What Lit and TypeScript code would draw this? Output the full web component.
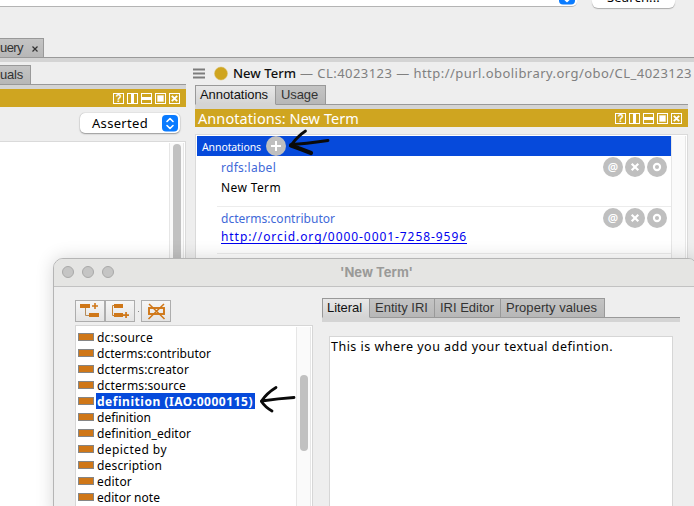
import { LitElement, html, css, svg } from "lit";
import { customElement, property } from "lit/decorators.js";
import { classMap } from "lit/directives/class-map.js";

/** One line of text whose tracking is adjusted so that it spans a given width. */
@customElement("fit-text")
class FitText extends LitElement {
  @property() text = "";
  @property({ type: Number }) w = 0;
  static styles = css`
    :host { display: inline-block; white-space: pre; flex: none; }
    .t { display: inline-block; white-space: pre; }
  `;
  firstUpdated() {
    const el = this.renderRoot.querySelector(".t") as HTMLElement;
    const natural = el.getBoundingClientRect().width;
    if (this.w && natural) {
      el.style.letterSpacing = `${(this.w - natural) / this.text.length}px`;
    }
  }
  render() {
    return html`<span class="t">${this.text}</span>`;
  }
}

/** The five window controls at the right of a gold view header. */
@customElement("view-controls")
class ViewControls extends LitElement {
  static styles = css`
    :host { display: block; height: 11px; }
    svg { display: block; }
    text { font: bold 10px "Liberation Sans", sans-serif; fill: #fff; }
  `;
  render() {
    const box = (x: number) => svg`<rect x=${x + 0.5} y="0.5" width="10" height="10" fill="none" stroke="#fff"/>`;
    return html`<svg width="67" height="11" viewBox="0 0 67 11">
      ${[0, 14, 28, 42, 56].map(box)}
      <text x="2.4" y="9.2">?</text>
      <rect x="18" y="1" width="3" height="9" fill="#fff"/>
      <rect x="29" y="4" width="9" height="3" fill="#fff"/>
      <rect x="44" y="2" width="7" height="7" fill="#fff" opacity=".35"/>
      <rect x="44.500" y="2.500" width="6" height="6" fill="#fff"/>
      <path d="M58.800 2.800l5.400 5.400M64.200 2.800l-5.400 5.400" stroke="#fff" stroke-width="1.900"/>
    </svg>`;
  }
}

interface Tab { label: string; w: number; box: number; active?: boolean; close?: boolean }

@customElement("tab-strip")
class TabStrip extends LitElement {
  @property({ attribute: false }) tabs: Tab[] = [];
  static styles = css`
    :host { display: block; height: 24px; font: 13px "Liberation Sans", sans-serif; }
    .row { display: flex; height: 20px; }
    .tab {
      box-sizing: border-box; height: 20px; border: 1px solid #999; border-left-width: 0;
      background: linear-gradient(#c4c4c4, #b7b7b7); color: #333;
      display: flex; align-items: center; padding-left: 5px; line-height: 18px;
    }
    .tab:first-child { border-left-width: 1px; padding-left: 4px; }
    .active { background: linear-gradient(#e8e8e8, #d4d4d4); color: #111; border-bottom-color: #d4d4d4; }
    .rest { flex: 1; border-bottom: 1px solid #999; }
    .band { height: 4px; background: #d4d4d4; }
    .cut:first-child { border-left: 0; padding-left: 0; }
    .x { margin: 1px 0 0 7px; flex: none; }
  `;
  render() {
    return html`<div class="row">
        ${this.tabs.map((t) => html`<div
          class=${classMap({ tab: true, active: !!t.active, cut: t.label[0] === "u" })}
          style="width:${t.box}px"
        ><fit-text .text=${t.label} .w=${t.w}></fit-text>${t.close
          ? html`<svg class="x" width="10" height="10"><path d="M2.500 2.500l5 5M7.500 2.500l-5 5" stroke="#333" stroke-width="1.200"/></svg>`
          : ""}</div>`)}
        <div class="rest"></div>
      </div><div class="band"></div>`;
  }
}

const stepper = (h = 17) => html`<svg width="16" height=${h} viewBox="0 0 16 17">
  <rect width="16" height="16.500" rx="4" fill="#0a7bff"/>
  <path d="M5 6.500L8 3.500L11 6.500M5 10.500L8 13.500L11 10.500" fill="none" stroke="#fff" stroke-width="1.600" stroke-linecap="round" stroke-linejoin="round"/>
</svg>`;

const roundButtons = html`<svg class="acts" width="64" height="20" viewBox="0 0 64 20">
  <g fill="#bfbfbf"><circle cx="10" cy="10" r="10"/><circle cx="32" cy="10" r="10"/><circle cx="54" cy="10" r="10"/></g>
  <text x="10" y="13.500" text-anchor="middle">@</text>
  <path d="M28.700 6.700l6.600 6.600M35.300 6.700l-6.600 6.600" stroke="#fff" stroke-width="2.200"/>
  <circle cx="54" cy="10" r="3.100" fill="none" stroke="#fff" stroke-width="2.100"/>
</svg>`;

const PROPS: [string, number][] = [
  ["dc:source", 56], ["dcterms:contributor", 114], ["dcterms:creator", 92], ["dcterms:source", 89],
  ["definition (IAO:0000115)", 156], ["definition", 54], ["definition_editor", 94],
  ["depicted by", 70], ["description", 65], ["editor", 35], ["editor note", 63],
];

@customElement("app-root")
class AppRoot extends LitElement {
  static styles = css`
    :host {
      display: block; position: relative; width: 694px; height: 506px; overflow: hidden;
      background: #eeeeee; color: #000;
      font: 12px "Noto Sans", "Open Sans", sans-serif;
    }
    svg { display: block; flex: none; }
    .top { display: flex; height: 38px; align-items: flex-start; }
    .field {
      width: 577px; height: 7px; background: #fff; border-bottom: 1px solid #b4b4b4;
      border-radius: 0 0 5px 0; display: flex; justify-content: flex-end; box-sizing: border-box;
      padding-right: 2px; overflow: hidden;
    }
    .field svg { margin-top: -12px; }
    .search {
      margin-left: 15px; width: 83px; height: 8px; background: #fff; border-radius: 0 0 6px 6px;
      box-shadow: 0 1px 1px #aaa; display: flex; justify-content: center;
      font-size: 13px; line-height: 18px;
    }
    .search fit-text { margin-top: -12px; height: 18px; }
    .cols { display: flex; height: 444px; }
    .left { width: 186px; padding-top: 3px; }
    .right { margin-left: 9px; width: 499px; }
    .right .inner { width: 493px; }
    .gold {
      height: 18px; background: #cfa520; display: flex; align-items: center; justify-content: space-between;
      color: #fff; font-size: 14.5px; line-height: 18px; padding: 0 6px 0 3px;
    }
    .gold fit-text { margin-top: -1px; }
    .left .gold { justify-content: flex-end; }
    .pick { display: flex; height: 34px; padding: 6px 6px 0 0; box-sizing: border-box; justify-content: flex-end; }
    .select {
      width: 100px; height: 20px; background: #fff; border-radius: 5px;
      box-shadow: 0 0 1px #999, 0 1px 1.500px #999;
      display: flex; align-items: center; justify-content: space-between; box-sizing: border-box;
      padding: 0 2px 0 12px; font-size: 13px; line-height: 20px;
    }
    .tree {
      border: 1px solid #dadada; border-left: 0; border-width: 1px 1px 0 0; background: #fff;
      height: 380px; display: flex; justify-content: flex-end; padding: 1px 1px 0 0;
    }
    .track { width: 13px; background: #fafafa; border: 1px solid #e6e6e6; border-width: 0 1px; display: flex; justify-content: center; }
    .thumb { width: 8px; border-radius: 4px; background: #c1c1c1; }
    .left .thumb { margin-top: 1px; height: 300px; }
    .head { height: 23px; display: flex; align-items: center; white-space: pre; font-size: 13px; color: #808080; line-height: 20px; }
    .head fit-text { margin-top: -2px; }
    .head .name { color: #111; font-weight: 500; margin: -2px 4px 0 5px; }
    .head .ham { margin: -1px 8px 0 -2px; }
    .list {
      margin-top: 7px; border: 1px solid #dadada; background: #fff; height: 200px;
      display: flex; padding: 1px 0 0 1px; box-sizing: border-box; width: 493px;
    }
    .body { width: 474px; }
    .sel { height: 20px; background: #064adb; color: #fff; font-size: 10.500px; display: flex; align-items: center; padding-left: 5px; line-height: 20px; }
    .sel fit-text { margin-top: 1px; }
    .sel svg { margin-left: 5px; }
    .entry { margin-left: 20px; height: 50px; border-bottom: 1px solid #ececec; display: flex; justify-content: space-between; }
    .entry + .entry { height: 46px; }
    .key { color: #4169d8; line-height: 16px; padding: 4px 0 0 4px; height: 17px; }
    .val { line-height: 16px; padding: 3px 0 0 4px; }
    .entry + .entry .val { padding-top: 1px; }
    .link { color: #0000ee; }
    .link fit-text { height: 14px; line-height: 15px; border-bottom: 1px solid #0000ee; }
    .acts { margin: 1px 4px 0 0; }
    .acts text { font: 600 11.500px "Noto Sans", sans-serif; fill: #fff; }

    .dialog {
      position: absolute; left: 53px; top: 258px; width: 645px; height: 260px; box-sizing: border-box;
      border: 1px solid #b5b5b5; border-radius: 10px 10px 0 0; background: #eeeeee;
      box-shadow: 0 0 18px rgba(0,0,0,.16); overflow: hidden;
    }
    .title {
      height: 25px; padding-bottom: 2px; background: #e5e5e3; border-bottom: 1px solid #c2c2c2; display: flex;
      align-items: center; color: #9a9a98; font: bold 13px Inter, sans-serif; padding-left: 7px;
    }
    .title fit-text { margin-left: 225px; }
    .content { display: flex; }
    .lcol { margin: 13px 0 0 21px; width: 238px; }
    .bar { display: flex; align-items: center; height: 22px; }
    .btn { width: 30px; height: 22px; box-sizing: border-box; border: 1px solid #adadad; background: linear-gradient(#f6f6f6, #e4e4e4); }
    .dot { width: 1px; height: 1px; background: #888; margin: 0 2px 0 3px; }
    .props {
      margin-top: 3px; height: 200px; border: 1px solid #d6d6d6; background: #fff; display: flex;
      justify-content: space-between; box-sizing: border-box; padding: 1px 1px 0 2px;
    }
    .items { padding-top: 2px; }
    .item { height: 16px; display: flex; align-items: center; line-height: 16px; }
    .ico { width: 16px; height: 8px; box-sizing: border-box; border: 1px solid #858585; background: #cf7718; margin: -1px 2px 0 0; }
    .lab { padding: 1px 2px 0 1px; height: 15px; line-height: 16px; }
    .lab.on { background: #064adb; color: #fff; font-weight: bold; }
    .props .thumb { height: 76px; margin-top: 48px; }
    .rcol { margin: 11px 0 0 9px; width: 358px; }
    .area { margin: 14px 0 0 7px; width: 344px; height: 190px; box-sizing: border-box; border: 1px solid #d6d6d6; background: #fff; padding: 0 0 0 1px; font-size: 12.500px; line-height: 20px; }
    .arrow { position: absolute; }
    .a1 { left: 287px; top: 128px; }
    .a2 { left: 257px; top: 384px; }
  `;

  render() {
    return html`
      <div class="top">
        <div class="field">${stepper()}</div>
        <div class="search"><fit-text text="Search..." w="53"></fit-text></div>
      </div>
      <tab-strip .tabs=${[{ label: "uery", w: 23, box: 44, close: true }]}></tab-strip>
      <div class="cols">
        <div class="left">
          <tab-strip .tabs=${[{ label: "uals", w: 23, box: 31 }]}></tab-strip>
          <div class="gold"><view-controls></view-controls></div>
          <div class="pick"><div class="select"><fit-text text="Asserted" w="56"></fit-text>${stepper()}</div></div>
          <div class="tree"><div class="track"><div class="thumb"></div></div></div>
        </div>
        <div class="right">
          <div class="head">
            <svg class="ham" width="12" height="11"><path d="M0 1.500h12M0 5.500h12M0 9.500h12" stroke="#7c7c7c" stroke-width="1.800"/></svg>
            <svg width="15" height="15"><circle cx="8" cy="7.500" r="6.500" fill="#cfa520" stroke="#d9bc62" stroke-width=".5"/></svg>
            <fit-text class="name" text="New Term" w="63"></fit-text>
            <fit-text text="— CL:4023123 — http://purl.obolibrary.org/obo/CL_4023123" w="392"></fit-text>
          </div>
          <div class="inner">
            <tab-strip .tabs=${[{ label: "Annotations", w: 68, box: 81, active: true }, { label: "Usage", w: 37, box: 50 }]}></tab-strip>
            <div class="gold"><fit-text text="Annotations: New Term" w="161"></fit-text><view-controls></view-controls></div>
            <div class="list">
              <div class="body">
                <div class="sel"><fit-text text="Annotations" w="59"></fit-text>
                  <svg width="20" height="20"><circle cx="10" cy="10" r="10" fill="#bfbfbf"/><path d="M10 5v10M5 10h10" stroke="#fff" stroke-width="2"/></svg>
                </div>
                <div class="entry">
                  <div><div class="key"><fit-text text="rdfs:label" w="55"></fit-text></div>
                    <div class="val"><fit-text text="New Term" w="60"></fit-text></div></div>
                  ${roundButtons}
                </div>
                <div class="entry">
                  <div><div class="key"><fit-text text="dcterms:contributor" w="114"></fit-text></div>
                    <div class="val link"><fit-text text="http://orcid.org/0000-0001-7258-9596" w="246"></fit-text></div></div>
                  ${roundButtons}
                </div>
              </div>
              <div class="track"></div>
            </div>
          </div>
        </div>
      </div>

      <div class="dialog">
        <div class="title">
          <svg width="54" height="14"><g fill="#c5c5c4" stroke="#a9a9a8"><circle cx="7" cy="7" r="5.500"/><circle cx="27" cy="7" r="5.500"/><circle cx="47" cy="7" r="5.500"/></g></svg>
          <fit-text text="'New Term'" w="73"></fit-text>
        </div>
        <div class="content">
          <div class="lcol">
            <div class="bar">
              <div class="btn"><svg width="28" height="20"><g fill="#cf7718"><rect x="4" y="3" width="10" height="4"/><rect x="13" y="12" width="10" height="4"/><path d="M18.200 2h1.600v2.200h2.200v1.600h-2.200v2.200h-1.600v-2.200h-2.200v-1.600h2.200z"/></g><path d="M9.500 7v7.500H13" fill="none" stroke="#b58c5c"/></svg></div>
              <div class="btn"><svg width="28" height="20"><g fill="#cf7718"><rect x="8" y="3" width="9" height="4"/><rect x="8" y="12" width="9" height="4"/><path d="M19.200 11h1.700v2.200H23v1.700h-2.100V17h-1.700v-2.100H17v-1.700h2.200z"/></g><path d="M8 4.500H6.500V14.500H8" fill="none" stroke="#c58437"/></svg></div>
              <div class="dot"></div>
              <div class="btn"><svg width="28" height="20"><g fill="none" stroke="#cf7718"><rect x="7" y="7" width="15" height="6" stroke-width="1.900"/><path d="M7 3l15.500 15M22 3L6.500 18" stroke-width="1.500"/></g></svg></div>
            </div>
            <div class="props">
              <div class="items">
                ${PROPS.map(([name, w], i) => html`<div class="item"><span class="ico"></span><span class=${classMap({ lab: true, on: i === 4 })}><fit-text .text=${name} .w=${w}></fit-text></span></div>`)}
              </div>
              <div class="track"><div class="thumb"></div></div>
            </div>
          </div>
          <div class="rcol">
            <tab-strip .tabs=${[
              { label: "Literal", w: 35, box: 48, active: true },
              { label: "Entity IRI", w: 53, box: 65 },
              { label: "IRI Editor", w: 54, box: 66 },
              { label: "Property values", w: 91, box: 104 },
            ]}></tab-strip>
            <div class="area"><fit-text text="This is where you add your textual defintion." w="282"></fit-text></div>
          </div>
        </div>
      </div>

      <svg class="arrow a1" width="44" height="38" fill="none" stroke="#0a0a0a" stroke-linecap="round" stroke-linejoin="round">
        <path d="M18.500 3Q11 8 4.500 16.500Q17 16 41 12.500" stroke-width="2.800"/>
        <path d="M4 17.500Q14 21 24 25" stroke-width="4.200"/>
      </svg>
      <svg class="arrow a2" width="44" height="34" fill="none" stroke="#0a0a0a" stroke-linecap="round" stroke-linejoin="round">
        <path d="M19 3.500Q10 9 4.500 17Q22 14.500 37 13.500" stroke-width="2.800"/>
        <path d="M4.500 17.500Q8 23 15 27" stroke-width="2.800"/>
      </svg>
    `;
  }
}
